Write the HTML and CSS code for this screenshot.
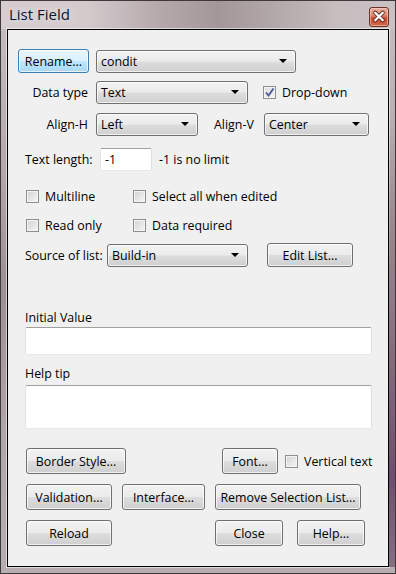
FILE: index.html
```html
<!DOCTYPE html>
<html>
<head>
<meta charset="utf-8">
<link rel="stylesheet" href="styles.css">
</head>
<body>
<div class="window">
  <div class="titlebar">
    <span class="title">List Field</span>
    <div class="close">
      <svg width="19" height="19" viewBox="0 0 19 19">
        <path d="M5.5 5.5 L13.5 13.5 M13.5 5.5 L5.5 13.5" stroke="#5a2a20" stroke-width="4.2" stroke-linecap="round"/>
        <path d="M5.5 5.5 L13.5 13.5 M13.5 5.5 L5.5 13.5" stroke="#ffffff" stroke-width="2.4" stroke-linecap="round"/>
      </svg>
    </div>
  </div>
  <div class="client">
    <div class="row r-name">
      <div class="btn default w-rename">Rename...</div>
      <div class="combo w-name">condit<span class="arrow"></span></div>
    </div>
    <div class="row r-type">
      <div class="lbl">Data type</div>
      <div class="combo w-type">Text<span class="arrow"></span></div>
      <div class="check dd"><span class="box checked"><svg width="11" height="11" viewBox="0 0 11 11"><path d="M2 5.5 L4.5 8.5 L9.5 1.5" fill="none" stroke="#4a5b96" stroke-width="1.9"/></svg></span>Drop-down</div>
    </div>
    <div class="row r-align">
      <div class="lbl">Align-H</div>
      <div class="combo w-alh">Left<span class="arrow"></span></div>
      <div class="lbl-v">Align-V</div>
      <div class="combo w-alv">Center<span class="arrow"></span></div>
    </div>
    <div class="row r-len">
      <div class="lbl-len">Text length:</div>
      <div class="input w-len">-1</div>
      <div class="hint">-1 is no limit</div>
    </div>
    <div class="row r-chk1">
      <div class="check c1"><span class="box"></span>Multiline</div>
      <div class="check"><span class="box"></span>Select all when edited</div>
    </div>
    <div class="row r-chk2">
      <div class="check c1"><span class="box"></span>Read only</div>
      <div class="check"><span class="box"></span>Data required</div>
    </div>
    <div class="row r-src">
      <div class="lbl-src">Source of list:</div>
      <div class="combo w-src">Build-in<span class="arrow"></span></div>
      <div class="btn w-edit">Edit List...</div>
    </div>
    <div class="field-lbl fl-init">Initial Value</div>
    <div class="input wide h-init"></div>
    <div class="field-lbl fl-help">Help tip</div>
    <div class="input wide h-help"></div>
    <div class="row r-b1">
      <div class="btn b w-border">Border Style...</div>
      <div class="btn b w-font">Font...</div>
      <div class="check vt"><span class="box"></span>Vertical text</div>
    </div>
    <div class="row r-b2">
      <div class="btn b w-valid">Validation...</div>
      <div class="btn b w-inter">Interface...</div>
      <div class="btn b w-remove">Remove Selection List...</div>
    </div>
    <div class="row r-b3">
      <div class="btn b w-reload">Reload</div>
      <div class="btn b w-close">Close</div>
      <div class="btn b w-help">Help...</div>
    </div>
  </div>
</div>
</body>
</html>
```
FILE: styles.css
```css
* { box-sizing: border-box; }
html, body { margin: 0; padding: 0; }
body {
  width: 396px; height: 574px; overflow: hidden;
  font-family: "Open Sans", "Noto Sans", sans-serif;
  font-size: 12.4px; color: #000; white-space: nowrap;
}
.window {
  width: 396px; height: 574px;
  border: 1px solid #3e3a3b;
  background: linear-gradient(180deg, #c8bfc1 0%, #b3a7aa 30%, #9d9093 50%, #b0a5a7 75%, #b8aeb0 100%);
  position: relative;
  display: flex; flex-direction: column;
  padding: 0 6px 6px 6px;
}
.window::after {
  content: ""; position: absolute; right: 0; top: 120px; width: 6px; bottom: 6px;
  background: linear-gradient(180deg, rgba(120,100,110,0) 0%, #8f7a85 40%, #6d4f6e 80%, #857083 100%);
}
.titlebar {
  height: 28px; margin: 0 -6px; padding-left: 8px;
  display: flex; align-items: center; justify-content: space-between;
  background: linear-gradient(90deg, #d6cdd0 0%, #d3cacc 22%, #b6a9ac 40%, #a3979a 55%, #b3a8aa 70%, #c6bdbf 85%, #c9c1c3 100%);
}
.title {
  font-size: 15px; color: #0b1631; margin-top: -2px;
  text-shadow: 0 0 8px rgba(255,255,255,0.8);
}
.close {
  width: 20px; height: 20px; margin-right: 6px; margin-top: 3px;
  border: 1px solid #6b3226; border-radius: 3px;
  background: linear-gradient(180deg, #eab3a3 0%, #d9806a 45%, #c6492b 55%, #d3684a 100%);
  display: flex; align-items: center; justify-content: center;
  box-shadow: inset 0 0 0 1px rgba(255,220,210,0.5);
}
.client {
  flex: 1;
  background: #f0f0f0;
  border: 1px solid #000;
  box-shadow: 0 0 0 1px rgba(255,255,255,0.55);
  position: relative;
  display: flex; flex-direction: column;
}
.row { display: flex; align-items: center; }
.btn {
  display: flex; align-items: center; justify-content: center;
  border: 1px solid #707070; border-radius: 3px;
  background: linear-gradient(180deg, #f2f2f2 0%, #ebebeb 48%, #dddddd 52%, #cfcfcf 100%);
  box-shadow: inset 0 0 0 1px rgba(255,255,255,0.7);
  height: 24px;
}
.btn.default {
  border-color: #3c7fb1;
  background: linear-gradient(180deg, #eaf6fd 0%, #d9f0fc 48%, #bee6fd 52%, #a7d9f5 100%);
}
.combo {
  position: relative; height: 23px;
  border: 1px solid #707070; border-radius: 3px;
  background: linear-gradient(180deg, #f2f2f2 0%, #ebebeb 48%, #dddddd 52%, #cfcfcf 100%);
  box-shadow: inset 0 0 0 1px rgba(255,255,255,0.7);
  padding-left: 4px; display: flex; align-items: center;
}
.arrow {
  position: absolute; right: 8px; top: 8px;
  width: 0; height: 0;
  border-left: 4px solid transparent; border-right: 4px solid transparent;
  border-top: 4px solid #000;
}
.input {
  background: #fff;
  border: 1px solid #abadb3; border-top-color: #a0a0a0;
  border-left-color: #e2e3ea; border-right-color: #dbdfe6; border-bottom-color: #e3e9ef;
  border-radius: 2px;
  display: flex; align-items: center; padding-left: 4px;
}
.check { display: flex; align-items: center; }
.box {
  width: 13px; height: 13px; margin-right: 6px;
  border: 1px solid #8e8f8f;
  background: linear-gradient(135deg, #d2d2d2 0%, #e8e8e8 60%, #f6f6f6 100%);
  box-shadow: inset 0 0 0 1px #f4f4f4;
  display: flex; align-items: center; justify-content: center;
}
.box.checked { background: linear-gradient(135deg, #e0e0e0 0%, #f0f0f0 100%); }

.r-name { margin: 19px 0 0 10px; }
.w-rename { width: 71px; height: 24px; }
.w-name { width: 200px; margin-left: 7px; }
.r-type { margin: 8px 0 0 10px; }
.lbl { width: 70px; text-align: right; margin-right: 8px; }
.w-type { width: 152px; }
.dd { margin-left: 15px; }
.r-align { margin: 9px 0 0 10px; }
.w-alh { width: 102px; }
.lbl-v { margin-left: 16px; width: 50px; }
.w-alv { width: 105px; }
.r-len { margin: 12px 0 0 17px; }
.lbl-len { width: 75px; }
.w-len { width: 52px; height: 23px; }
.hint { margin-left: 7px; }
.r-chk1 { margin: 15px 0 0 18px; height: 20px; }
.r-chk2 { margin: 9px 0 0 18px; height: 20px; }
.c1 { width: 107px; }
.r-src { margin: 8px 0 0 17px; }
.lbl-src { width: 82px; }
.w-src { width: 141px; }
.w-edit { width: 86px; margin-left: 19px; }
.field-lbl { margin-left: 17px; height: 16px; line-height: 16px; }
.fl-init { margin-top: 43px; }
.input.wide { margin-left: 17px; width: 347px; }
.h-init { height: 28px; margin-top: 1px; }
.fl-help { margin-top: 11px; }
.h-help { height: 44px; margin-top: 3px; }
.r-b1 { margin: 19px 0 0 18px; }
.btn.b { height: 26px; }
.w-border { width: 100px; }
.w-font { width: 56px; margin-left: 96px; }
.vt { margin-left: 7px; }
.r-b2 { margin: 10px 0 0 18px; }
.w-valid { width: 86px; }
.w-inter { width: 83px; margin-left: 10px; }
.w-remove { width: 146px; margin-left: 10px; }
.r-b3 { margin: 10px 0 0 18px; }
.w-reload { width: 86px; }
.w-close { width: 68px; margin-left: 103px; }
.w-help { width: 68px; margin-left: 14px; }
```
